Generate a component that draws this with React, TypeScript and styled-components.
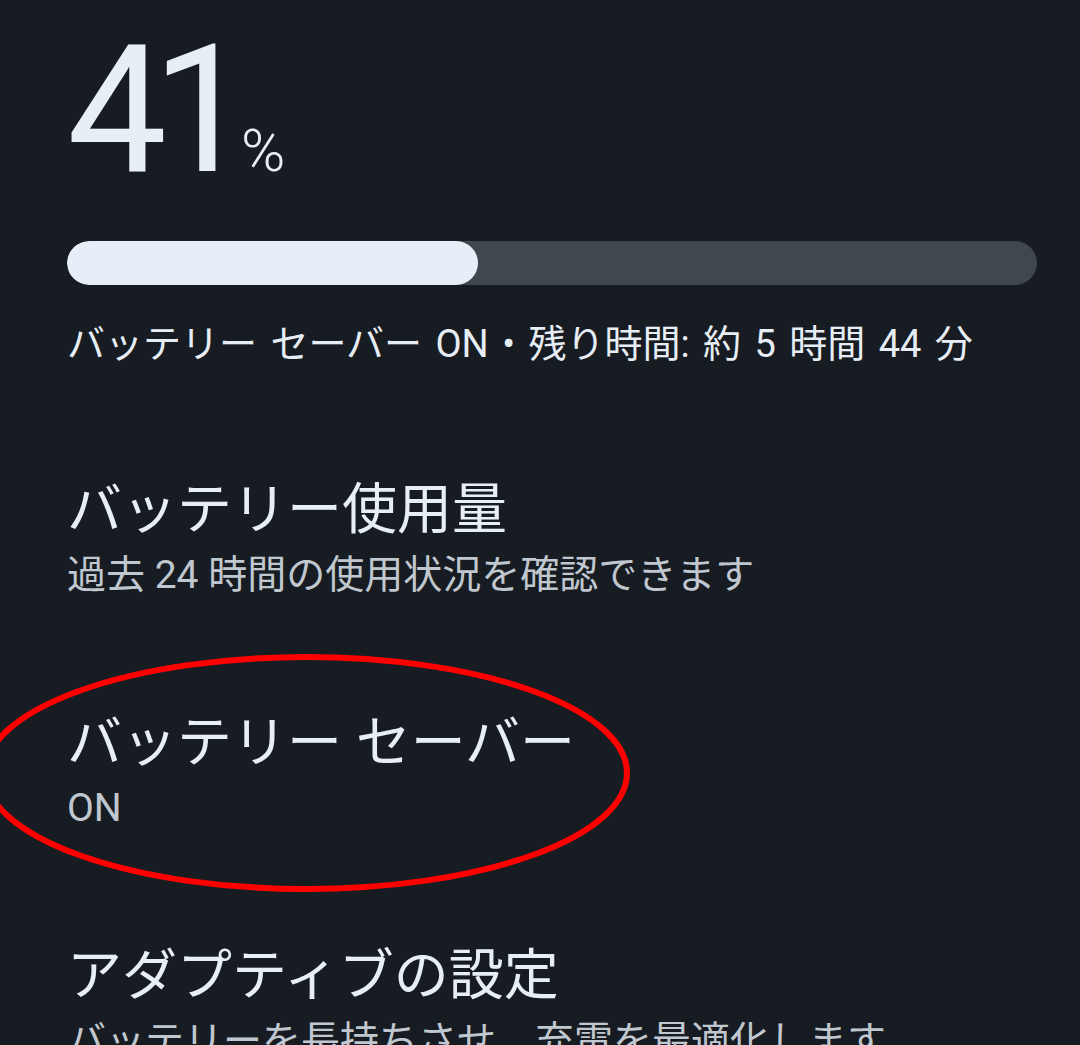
import React from "react";
import styled, { createGlobalStyle } from "styled-components";

const GlobalStyle = createGlobalStyle`
  html, body {
    margin: 0;
    padding: 0;
    background: #171c22;
  }
  body {
    font-family: "Roboto", "Noto Sans CJK JP", sans-serif;
    overflow: hidden;
  }
`;

const Screen = styled.div`
  position: relative;
  width: 1080px;
  height: 1045px;
  overflow: hidden;
  background: #171c22;
  color: #e7edf5;
  padding: 10px 44px 0 67px;
  box-sizing: border-box;
`;

const Level = styled.div`
  display: flex;
  align-items: baseline;
  height: 200px;
`;

const BigNumber = styled.span`
  font-family: "Roboto", sans-serif;
  font-size: 178px;
  line-height: 200px;
  letter-spacing: -15px;
  color: #e8eef6;
`;

const Percent = styled.span`
  font-family: "Roboto", sans-serif;
  font-size: 60px;
  font-weight: 300;
  margin-left: 4px;
  color: #e8eef6;
`;

const Track = styled.div`
  margin-top: 31px;
  height: 44px;
  width: 970px;
  border-radius: 22px;
  background: #41474e;
  overflow: hidden;
`;

const Fill = styled.div`
  height: 100%;
  border-radius: 22px;
  background: #e8eef7;
`;

const Status = styled.div`
  margin-top: 33px;
  font-size: 38px;
  line-height: 52px;
  word-spacing: 4px;
  color: #e7edf5;
  white-space: nowrap;
`;

const List = styled.div`
  display: flex;
  flex-direction: column;
  margin-top: 106px;
  gap: 108px;
`;

const Item = styled.div`
  display: flex;
  flex-direction: column;
`;

const Title = styled.div`
  font-size: 55px;
  line-height: 66px;
  color: #e8eef6;
  white-space: nowrap;
`;

const Summary = styled.div`
  font-size: 39px;
  line-height: 52px;
  color: #c0c7cf;
  white-space: nowrap;
  margin-top: 7px;
`;

const Circle = styled.svg`
  position: absolute;
  left: 0;
  top: 0;
  pointer-events: none;
`;

const items = [
  { title: "バッテリー使用量", summary: "過去 24 時間の使用状況を確認できます" },
  { title: "バッテリー セーバー", summary: "ON" },
  { title: "アダプティブの設定", summary: "バッテリーを長持ちさせ、充電を最適化します" },
];

const level = 41;

export default function App() {
  return (
    <>
      <GlobalStyle />
      <Screen>
        <Level>
          <BigNumber>{level}</BigNumber>
          <Percent>%</Percent>
        </Level>
        <Track>
          <Fill style={{ width: `${(411 / 970) * 100}%` }} />
        </Track>
        <Status>バッテリー セーバー ON • 残り時間: 約 5 時間 44 分</Status>
        <List>
          {items.map((it) => (
            <Item key={it.title}>
              <Title>{it.title}</Title>
              <Summary>{it.summary}</Summary>
            </Item>
          ))}
        </List>
        <Circle width="1080" height="1045" viewBox="0 0 1080 1045">
          <ellipse cx="306" cy="773" rx="321" ry="116" fill="none" stroke="#ff0000" strokeWidth="6" />
        </Circle>
      </Screen>
    </>
  );
}
